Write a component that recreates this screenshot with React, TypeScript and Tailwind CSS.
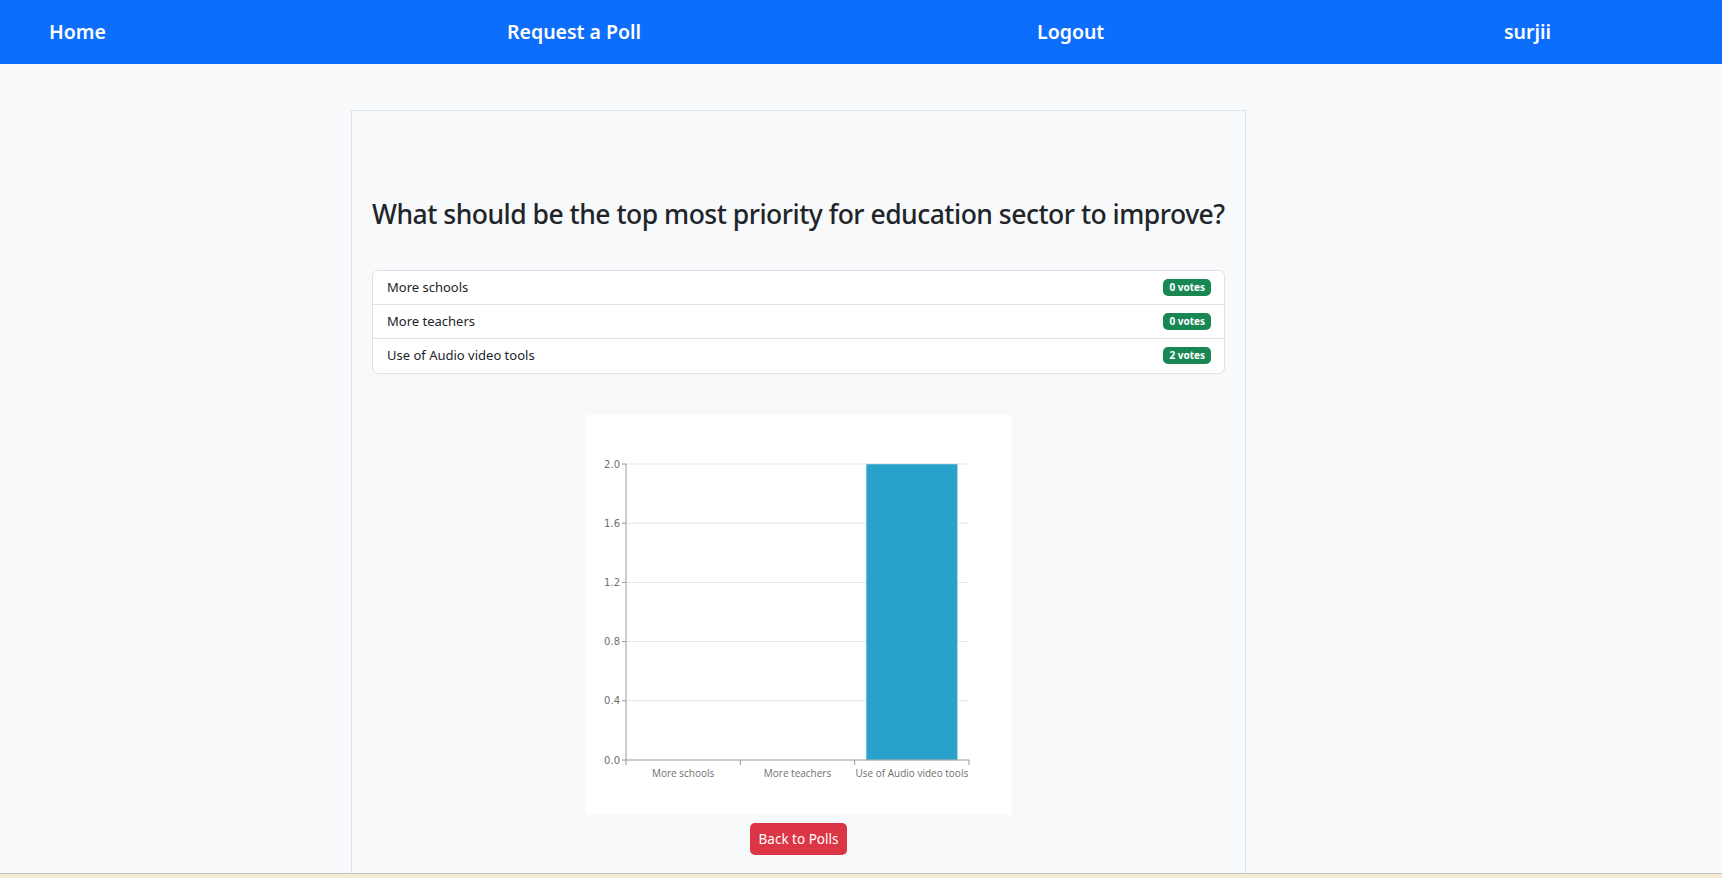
const options = [
  { label: "More schools", votes: 0 },
  { label: "More teachers", votes: 0 },
  { label: "Use of Audio video tools", votes: 2 },
];

function NavBar() {
  return (
    <nav className="h-16 bg-[#0d6efd] flex items-center pl-[49px] text-white text-[19.5px] font-semibold">
      <a className="w-[458px]">Home</a>
      <a className="w-[530px]">Request a Poll</a>
      <a className="w-[467px]">Logout</a>
      <a>surjii</a>
    </nav>
  );
}

function VotesChart() {
  // plot area inside a 427x400 box
  const left = 41;
  const top = 49;
  const right = 384;
  const bottom = 345;
  const max = 2;
  const band = (right - left) / options.length;
  const ticks = [0, 0.4, 0.8, 1.2, 1.6, 2.0];
  const yOf = (v: number) => bottom - (v / max) * (bottom - top);

  return (
    <div className="w-[427px] h-[400px] mx-auto mt-[41px] bg-white">
      <svg width="427" height="400" viewBox="0 0 427 400">
        {ticks.map((t) => (
          <g key={t}>
            {t > 0 && (
              <line x1={left} x2={right} y1={yOf(t)} y2={yOf(t)} stroke="#e6e6e6" strokeWidth="1" />
            )}
            <line x1={left - 4} x2={left} y1={yOf(t)} y2={yOf(t)} stroke="#999" strokeWidth="1" />
            <text
              x={left - 6}
              y={yOf(t) + 3.5}
              textAnchor="end"
              fontSize="10"
              fill="#6f6f6f"
              fontFamily="'DejaVu Sans', sans-serif"
            >
              {t.toFixed(1)}
            </text>
          </g>
        ))}
        {options.map((o, i) => {
          const h = (o.votes / max) * (bottom - top);
          const x = left + i * band;
          return (
            <g key={o.label}>
              {h > 0 && (
                <rect
                  x={x + band * 0.1}
                  y={bottom - h}
                  width={band * 0.8}
                  height={h}
                  fill="#29a2cb"
                  stroke="#bfe3ef"
                  strokeWidth="0.6"
                />
              )}
              <text
                x={x + band / 2}
                y={bottom + 17}
                textAnchor="middle"
                fontSize="10"
                fill="#6f6f6f"
                fontFamily="'Open Sans', sans-serif"
              >
                {o.label}
              </text>
            </g>
          );
        })}
        {[0, 1, 2, 3].map((i) => (
          <line
            key={i}
            x1={left + i * band}
            x2={left + i * band}
            y1={bottom}
            y2={bottom + 5}
            stroke="#999"
            strokeWidth="1"
          />
        ))}
        <line x1={left} x2={left} y1={top} y2={bottom} stroke="#999" strokeWidth="1" />
        <line x1={left} x2={right} y1={bottom} y2={bottom} stroke="#999" strokeWidth="1" />
      </svg>
    </div>
  );
}

export default function App() {
  return (
    <div className="min-h-screen bg-[#f8f9fa] font-['Noto_Sans',sans-serif] text-[#212529]">
      <NavBar />

      <div className="pt-[46px]">
        <div className="ml-[351px] w-[895px] border border-[#dee2e6] px-5 pt-[88px] pb-12">
          <h2 className="text-[26.5px] leading-[1.2] font-medium tracking-[-0.5px] whitespace-nowrap">
            What should be the top most priority for education sector to improve?
          </h2>

          {/* options with vote counts */}
          <ul className="mt-[39px] bg-white border border-[#dee2e6] rounded-md">
            {options.map((o, i) => (
              <li
                key={o.label}
                className={
                  "h-[34px] flex items-center justify-between pl-[14px] pr-[13px] text-[13px] " +
                  (i < options.length - 1 ? "border-b border-[#dee2e6]" : "")
                }
              >
                <span>{o.label}</span>
                <span className="h-[17px] px-[6px] flex items-center rounded-[5px] bg-[#198754] text-white text-[10px] font-bold">
                  {o.votes} votes
                </span>
              </li>
            ))}
          </ul>

          <VotesChart />

          <div className="flex justify-center mt-2">
            <button className="h-8 px-[9px] rounded-[5px] bg-[#dc3545] text-white text-[13.5px]">
              Back to Polls
            </button>
          </div>
        </div>
      </div>

      <div className="fixed bottom-0 left-0 right-0 h-[5px] bg-[#f3ead8] border-t border-[#c9c5bd]" />
    </div>
  );
}
